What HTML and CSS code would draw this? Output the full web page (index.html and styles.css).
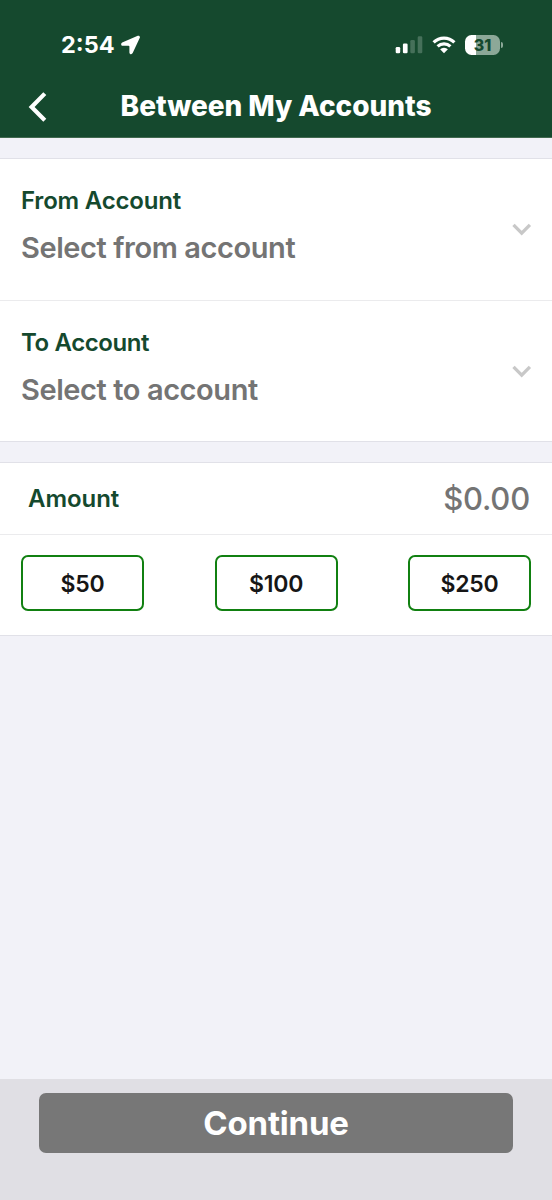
FILE: index.html
```html
<!DOCTYPE html>
<html lang="en">
<head>
<meta charset="utf-8">
<title>Between My Accounts</title>
<link rel="stylesheet" href="styles.css">
</head>
<body>
<div class="screen">
  <header class="header">
    <div class="status">
      <div class="status-left">
        <span class="time">2:54</span>
        <svg class="location" width="20" height="20" viewBox="0 0 20 20"><path d="M16.800 .8 1.200 7.500C-.5 8.300-.1 10.800 1.800 10.800H7.600c.5 0 .8.300.8.800V17.400c0 2 2.500 2.400 3.300.7L18.800 2.800c.6-1.300-.7-2.600-2-2Z"/></svg>
      </div>
      <div class="status-right">
        <svg class="signal" width="28" height="18" viewBox="0 0 28 18">
          <rect x=".7" y="11" width="4.500" height="6.200" rx="1.300"/>
          <rect x="7.900" y="7.500" width="4.700" height="9.700" rx="1.300"/>
          <rect class="dim" x="15.300" y="3.900" width="4.600" height="13.300" rx="1.300"/>
          <rect class="dim" x="22.700" y=".2" width="4.600" height="17" rx="1.300"/>
        </svg>
        <svg class="wifi" width="24" height="18" viewBox="0 0 24 18">
          <path class="arc" d="M1.600 6.300a14.800 14.800 0 0 1 20.800 0"/>
          <path class="arc" d="M5.600 10.400a9.200 9.200 0 0 1 12.800 0"/>
          <path d="M12 17.300 8.100 13.300a5.600 5.600 0 0 1 7.800 0Z"/>
        </svg>
        <div class="battery"><span class="battery-body">31</span><span class="battery-cap"></span></div>
      </div>
    </div>
    <div class="nav">
      <svg class="back" width="20" height="32" viewBox="0 0 20 32"><path d="M16.800 3.600 3.600 17l13.200 13.300"/></svg>
      <h1 class="title">Between My Accounts</h1>
    </div>
  </header>

  <main class="content">
    <section class="card">
      <div class="row account">
        <div>
          <div class="label">From Account</div>
          <div class="value">Select from account</div>
        </div>
        <svg class="chevron" width="20" height="14" viewBox="0 0 20 14"><path d="M1.500 1.800 9.700 10.100l8.200-8.300"/></svg>
      </div>
      <div class="row account">
        <div>
          <div class="label to-label">To Account</div>
          <div class="value">Select to account</div>
        </div>
        <svg class="chevron" width="20" height="14" viewBox="0 0 20 14"><path d="M1.500 1.800 9.700 10.100l8.200-8.300"/></svg>
      </div>
    </section>

    <section class="card">
      <div class="row amount">
        <span class="label amount-label">Amount</span>
        <span class="amount-value">$0.00</span>
      </div>
      <div class="row chips">
        <button class="chip">$50</button>
        <button class="chip">$100</button>
        <button class="chip">$250</button>
      </div>
    </section>
  </main>

  <footer class="footer">
    <button class="continue">Continue</button>
  </footer>
</div>
</body>
</html>
```
FILE: styles.css
```css
* { box-sizing: border-box; }

body {
  margin: 0;
  font-family: Inter, "Liberation Sans", sans-serif;
  background: #f2f2f8;
}

.screen {
  display: flex;
  flex-direction: column;
  width: 552px;
  height: 1200px;
}

.header {
  height: 138px;
  background: #15492e;
  color: #fff;
  border-bottom: 1px solid #41694f;
}

.status {
  display: flex;
  align-items: center;
  justify-content: space-between;
  height: 90px;
  padding: 0 49px 0 61px;
}

.status-left, .status-right, .battery { display: flex; align-items: center; }

.time {
  width: 60px;
  font-size: 23.500px;
  font-weight: 750;
  line-height: 30px;
}

.location, .signal, .wifi { fill: #fff; }
.signal { margin-right: 9px; }
.signal .dim { fill: #46705a; }
.wifi { margin-right: 9px; }
.wifi .arc { fill: none; stroke: #fff; stroke-width: 3.200; }

.battery-body {
  width: 35px;
  height: 20px;
  border-radius: 6.500px;
  background: linear-gradient(90deg, #fff 11px, #8ca898 11px);
  color: #15492e;
  font-size: 16px;
  font-weight: 800;
  line-height: 20px;
  text-align: center;
}

.battery-cap {
  width: 2px;
  height: 6px;
  margin-left: 1px;
  border-radius: 0 2px 2px 0;
  background: #8ca898;
}

.nav {
  display: grid;
  grid-template-columns: 60px 1fr 60px;
  align-items: center;
  height: 32px;
}

.back {
  margin-left: 28px;
  fill: none;
  stroke: #fff;
  stroke-width: 4.200;
}

.title {
  margin: 0;
  font-size: 28px;
  font-weight: 800;
  letter-spacing: -0.050px;
  line-height: 32px;
  text-align: center;
  white-space: nowrap;
}

.content { flex: 1; }

.card {
  margin-top: 20px;
  background: #fff;
  border-top: 1px solid #e1e1e8;
  border-bottom: 1px solid #e1e1e8;
}

.row + .row { border-top: 1px solid #ebebed; }

.account {
  display: flex;
  justify-content: space-between;
  height: 141px;
  padding: 27px 20px 0 21px;
}

.label {
  color: #15492e;
  font-size: 24px;
  font-weight: 600;
  letter-spacing: -0.200px;
  line-height: 30px;
}

.to-label { letter-spacing: -0.400px; }
.amount-label { letter-spacing: -0.050px; }

.value {
  margin-top: 14px;
  color: #747474;
  font-size: 29px;
  font-weight: 600;
  letter-spacing: -0.420px;
  line-height: 36px;
}

.chevron {
  margin-top: 37px;
  fill: none;
  stroke: #c8c8c8;
  stroke-width: 3.300;
}

.amount {
  display: flex;
  align-items: center;
  justify-content: space-between;
  height: 71px;
  padding: 1px 22px 0 28px;
}

.amount-value {
  color: #747474;
  font-size: 31px;
  font-weight: 550;
  letter-spacing: -0.200px;
  line-height: 40px;
}

.chips {
  display: flex;
  justify-content: space-between;
  height: 101px;
  padding: 20px 21px 0;
}

.chip {
  width: 123px;
  height: 56px;
  padding: 1px 0 0;
  border: 2px solid #118011;
  border-radius: 7px;
  background: #fff;
  color: #161616;
  font-family: inherit;
  font-size: 23px;
  font-weight: 600;
  letter-spacing: -0.200px;
}

.footer {
  height: 121px;
  padding: 14px 39px 0;
  background: #e0dfe4;
}

.continue {
  display: block;
  width: 474px;
  height: 60px;
  border: 0;
  border-radius: 7px;
  background: #777;
  color: #fff;
  font-family: inherit;
  font-size: 33px;
  font-weight: 650;
  letter-spacing: -0.200px;
}
```
